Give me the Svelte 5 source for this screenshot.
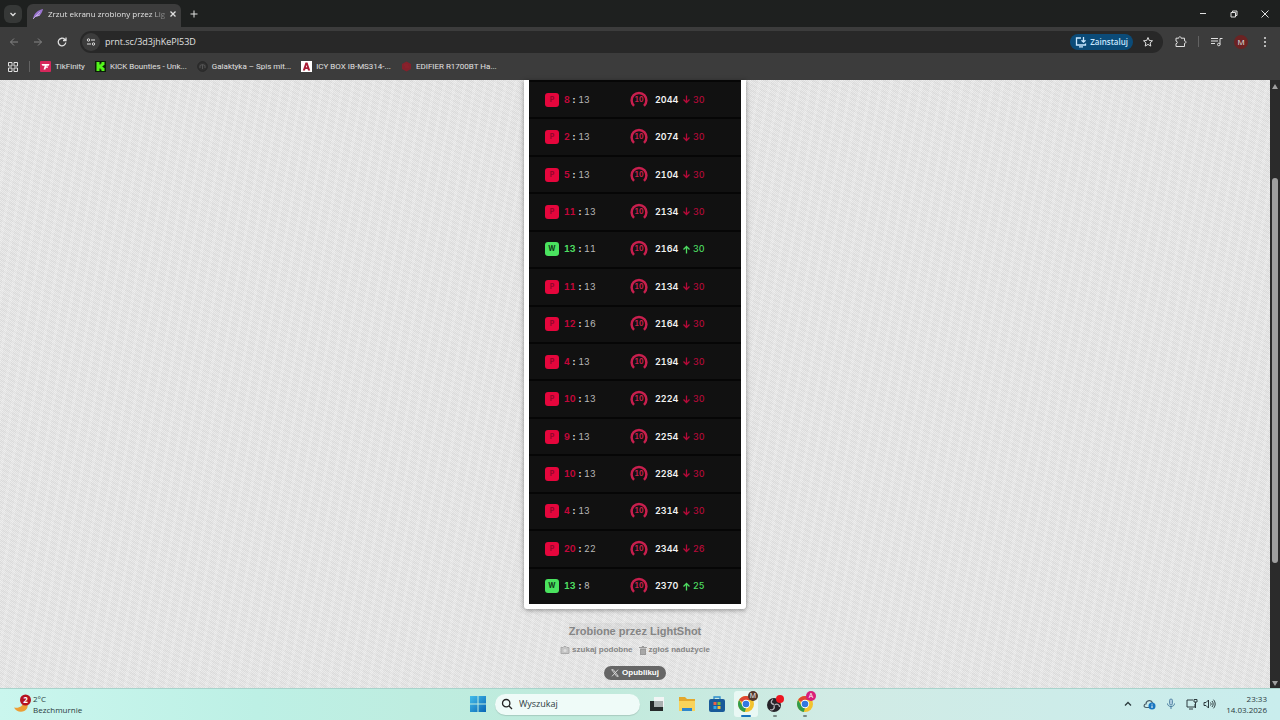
<script lang="ts">
  interface Match {
    own: number;
    rival: number;
    elo: number;
    change: number;
    won?: boolean;
  }

  const matches: Match[] = [
    { own: 8, rival: 13, elo: 2044, change: 30 },
    { own: 2, rival: 13, elo: 2074, change: 30 },
    { own: 5, rival: 13, elo: 2104, change: 30 },
    { own: 11, rival: 13, elo: 2134, change: 30 },
    { own: 13, rival: 11, elo: 2164, change: 30, won: true },
    { own: 11, rival: 13, elo: 2134, change: 30 },
    { own: 12, rival: 16, elo: 2164, change: 30 },
    { own: 4, rival: 13, elo: 2194, change: 30 },
    { own: 10, rival: 13, elo: 2224, change: 30 },
    { own: 9, rival: 13, elo: 2254, change: 30 },
    { own: 10, rival: 13, elo: 2284, change: 30 },
    { own: 4, rival: 13, elo: 2314, change: 30 },
    { own: 20, rival: 22, elo: 2344, change: 26 },
    { own: 13, rival: 8, elo: 2370, change: 25, won: true },
  ];

  const bookmarks = [
    { icon: "tik", title: "TikFinity" },
    { icon: "kick", title: "KICK Bounties - Unk..." },
    { icon: "galaxy", title: "Galaktyka – Spis mit..." },
    { icon: "icy", title: "ICY BOX IB-MS314-..." },
    { icon: "edifier", title: "EDIFIER R1700BT Ha..." },
  ];

  let url = $state("prnt.sc/3d3jhKePl53D");
  let query = $state("Wyszukaj");
</script>

{#snippet chrome()}
  <svg width="18" height="18" viewBox="0 0 18 18">
    <circle cx="9" cy="9" r="8" fill="#f2c32e" />
    <path d="M9 9 2.1 5A8 8 0 0 1 15.9 5H9z" fill="#df4634" />
    <path d="M2.1 5 5.6 11 9 13 7.8 16.900A8 8 0 0 1 2.1 5z" fill="#2f9c4d" />
    <circle cx="9" cy="9" r="4.2" fill="#fff" />
    <circle cx="9" cy="9" r="3.3" fill="#3478e0" />
  </svg>
{/snippet}

<div class="screen">
  <header class="titlebar">
    <button class="tab-search" aria-label="Search tabs">
      <svg width="10" height="10" viewBox="0 0 10 10"><path d="M2.500 4 5 6.500 7.500 4" class="line bold" /></svg>
    </button>
    <div class="tab">
      <svg width="12" height="12" viewBox="0 0 12 12">
        <path d="M1 11C2 5 6 2 11 1 10 6 7 9 3 9z" fill="#9a74cf" />
        <path d="M1 11 8 4M4 8l4-1" stroke="#d9c8f2" stroke-width=".7" />
      </svg>
      <span class="tab-title">Zrzut ekranu zrobiony przez Lig</span>
      <button aria-label="Close tab">
        <svg width="8" height="8" viewBox="0 0 8 8"><path d="m1.500 1.500 5 5M6.500 1.500l-5 5" class="line bold" /></svg>
      </button>
    </div>
    <button class="new-tab" aria-label="New tab">
      <svg width="10" height="10" viewBox="0 0 10 10"><path d="M5 1.500v7M1.500 5h7" class="line" /></svg>
    </button>
    <div class="window-buttons">
      <button aria-label="Minimize"><svg width="10" height="10" viewBox="0 0 10 10"><path d="M2 4.500h6" class="line" /></svg></button>
      <button aria-label="Restore">
        <svg width="10" height="10" viewBox="0 0 10 10"><path d="M2 3.500h4.500V8H2zM3.500 3.500V2H8v4.500H6.500" class="line" /></svg>
      </button>
      <button aria-label="Close"><svg width="10" height="10" viewBox="0 0 10 10"><path d="m1.500 1.500 7 7M8.500 1.500l-7 7" class="line" /></svg></button>
    </div>
  </header>

  <nav class="toolbar" aria-label="Navigation">
    <button class="dim" aria-label="Back"><svg width="12" height="12" viewBox="0 0 12 12"><path d="M10 6H2.500M6 2.500 2.500 6 6 9.500" class="line" /></svg></button>
    <button class="dim" aria-label="Forward"><svg width="12" height="12" viewBox="0 0 12 12"><path d="M2 6h7.500M6 2.500 9.500 6 6 9.500" class="line" /></svg></button>
    <button aria-label="Reload">
      <svg width="12" height="12" viewBox="0 0 12 12"><path d="M9.800 6.500A3.800 3.800 0 1 1 8.700 3.300L10 4.500M10 1.500v3H7" class="line bold" /></svg>
    </button>
    <div class="omnibox">
      <button class="site-info" aria-label="Site information">
        <svg width="10" height="10" viewBox="0 0 10 10">
          <circle cx="2.500" cy="3" r="1.200" class="line" /><circle cx="7.500" cy="7" r="1.200" class="line" />
          <path d="M5 3h4M1 7h4" class="line" />
        </svg>
      </button>
      <input class="url" aria-label="Address" bind:value={url} />
      <button class="install">
        <svg width="12" height="12" viewBox="0 0 12 12">
          <path d="M6 2H1.500v7h9V7.500M4 10.800h4M8.500 1v5M6.500 4.200l2 2 2-2" class="line bold" />
        </svg>
        Zainstaluj
      </button>
      <button class="star" aria-label="Bookmark this page">
        <svg width="12" height="12" viewBox="0 0 12 12"><path d="m6 1.500 1.300 3 3.200.3-2.400 2.100.7 3.200L6 8.400l-2.800 1.700.7-3.200-2.400-2.100 3.200-.3z" class="line" /></svg>
      </button>
    </div>
    <div class="actions">
      <button aria-label="Extensions">
        <svg width="13" height="13" viewBox="0 0 13 13"><path d="M2 3.200h2.700c0-2 2.400-2 2.400 0H10.500v2.700c2 0 2 2.400 0 2.400v3.200H2V8.700c1.800 0 1.800-2.600 0-2.600z" class="line" /></svg>
      </button>
      <span class="divider"></span>
      <button aria-label="Media">
        <svg width="13" height="12" viewBox="0 0 13 12"><path d="M1 2.500h7M1 5h7M1 7.500h4M12.500 2.500H10v6" class="line" /><circle cx="8.800" cy="8.500" r="1.300" class="line" /></svg>
      </button>
      <button class="profile" aria-label="Profile">M</button>
      <button aria-label="Menu">
        <svg width="12" height="12" viewBox="0 0 12 12" fill="currentColor"><circle cx="6" cy="2" r="1" /><circle cx="6" cy="6" r="1" /><circle cx="6" cy="10" r="1" /></svg>
      </button>
    </div>
  </nav>

  <nav class="bookmarks" aria-label="Bookmarks">
    <button aria-label="Apps">
      <svg width="12" height="12" viewBox="0 0 12 12"><path d="M1.500 1.500h3.500v3.500H1.500zM7 1.500h3.500v3.500H7zM1.500 7h3.500v3.500H1.500zM7 7h3.500v3.500H7z" class="line" /></svg>
    </button>
    <span class="divider"></span>
    {#each bookmarks as bookmark}
      <a href="#{bookmark.icon}">
        <svg width="11" height="11" viewBox="0 0 11 11">
          {#if bookmark.icon === "tik"}
            <rect width="11" height="11" rx="1" fill="#d6285c" />
            <path d="M1.500 3h8L8.700 4.700H6.600L5.400 8.500H3.600l1.100-3.800H2.500zM6.300 5.500h2L7.800 6.700H6z" fill="#fff" />
          {:else if bookmark.icon === "kick"}
            <rect width="11" height="11" fill="#0b1d08" />
            <path d="M1.500 1h3v2.500h1v-1h1V1h3v3h-1v1h-1v1h1v1h1v3h-3V8.500h-1v-1h-1V10h-3z" fill="#54f51b" />
          {:else if bookmark.icon === "galaxy"}
            <circle cx="5.500" cy="5.500" r="4.800" fill="#303030" stroke="#262626" />
            <path d="M3 7V4.500l2.500-1 2.500 1V7M5.500 3.500V8" fill="none" stroke="#555" />
          {:else if bookmark.icon === "icy"}
            <rect width="11" height="11" fill="#fff" />
            <path d="M1.800 9.500 4.500 1.500h2l2.700 8H7L6.600 8H4.400L4 9.500zM4.900 6.300h1.200l-.6-2.200z" fill="#a91c35" />
          {:else}
            <path d="M5.500.5 10 3v5l-4.500 2.500L1 8V3z" fill="#84202b" />
            <path d="M3 4h4M4 6h4" stroke="#96252f" stroke-width=".8" />
          {/if}
        </svg>
        {bookmark.title}
      </a>
    {/each}
  </nav>

  <div class="viewport">
    <main>
      <div class="card">
        <ul class="matches">
          {#each matches as match}
            <li class:won={match.won}>
              <span class="badge">{match.won ? "W" : "P"}</span>
              <span class="score"><b>{match.own}</b><i>:</i>{match.rival}</span>
              <span class="level">
                <svg width="20" height="20" viewBox="0 0 20 20">
                  <path d="M5 15.800A7.400 7.400 0 1 1 15 15.800" fill="none" stroke="#c81f4e" stroke-width="2.500" />
                </svg>
                <span>10</span>
              </span>
              <strong>{match.elo}</strong>
              <span class="change">
                <svg width="9" height="9" viewBox="0 0 9 9">
                  <path d={match.won ? "M4.500 8.500v-7M1.500 4.500l3-3 3 3" : "M4.500 .5v7M1.500 4.500l3 3 3-3"} class="line bold" />
                </svg>
                {match.change}
              </span>
            </li>
          {/each}
        </ul>
      </div>
      <footer>
        <a class="made" href="#lightshot">Zrobione przez LightShot</a>
        <div class="links">
          <a href="#similar">
            <svg width="10" height="8" viewBox="0 0 10 8"><path d="M1 1.500h2l1-1h2l1 1h2v6H1z" fill="#c4c4c4" stroke="#aaa" /><circle cx="5" cy="4.500" r="1.500" fill="#ddd" /></svg>
            szukaj podobne
          </a>
          <a href="#abuse">
            <svg width="8" height="9" viewBox="0 0 8 9"><path d="M0 1h8v1H0zM3 0h2v1H3zM1 2.500h6V9H1z" fill="#999" /><path d="M3 4v4M5 4v4" stroke="#ccc" stroke-width=".6" /></svg>
            zgłoś nadużycie
          </a>
        </div>
        <button class="publish">
          <svg width="8" height="8" viewBox="0 0 8 8"><path d="M.7.7h1.600l5 6.600H5.700zM7 .7 1 7.300" fill="none" stroke="#ddd" stroke-width=".9" /></svg>
          Opublikuj
        </button>
      </footer>
    </main>
    <div class="scrollbar">
      <svg width="6" height="5" viewBox="0 0 6 5"><path d="M3 0 6 5H0z" fill="#a0a0a0" /></svg>
      <div class="track"><div class="thumb"></div></div>
      <svg width="6" height="5" viewBox="0 0 6 5"><path d="M0 0h6L3 5z" fill="#a0a0a0" /></svg>
    </div>
  </div>

  <div class="taskbar">
    <button class="weather">
      <svg width="19" height="20" viewBox="0 0 19 20">
        <path d="M1 13.500c5 1 9-1 9.500-6 4 1 5 4 3.500 7C11 19 4 19 1 13.500z" fill="#ec9e35" />
        <circle cx="12.500" cy="6" r="5.500" fill="#b51220" />
        <text x="12.500" y="9" text-anchor="middle" font-size="8" font-weight="700" fill="#fff">2</text>
      </svg>
      <span>2°C<br />Bezchmurnie</span>
    </button>
    <div class="dock">
      <button aria-label="Start">
        <svg width="16" height="16" viewBox="0 0 16 16">
          <defs><linearGradient id="win" x2="1" y2="1"><stop stop-color="#43bdea" /><stop offset="1" stop-color="#0865b5" /></linearGradient></defs>
          <path d="M0 0h7.500v7.500H0zM8.500 0H16v7.500H8.500zM0 8.500h7.500V16H0zM8.500 8.500H16V16H8.500z" fill="url(#win)" />
        </svg>
      </button>
      <label class="search">
        <svg width="12" height="12" viewBox="0 0 12 12"><circle cx="5.200" cy="5.200" r="3.700" fill="none" stroke="#222" stroke-width="1.300" /><path d="m8 8 3 3" stroke="#222" stroke-width="1.300" /></svg>
        <input aria-label="Wyszukaj" bind:value={query} />
      </label>
      <div class="apps">
        <button aria-label="Task view">
          <svg width="16" height="16" viewBox="0 0 16 16"><path d="M5 1h10v10H5z" fill="#f2f5f5" /><path d="M1 5h4v6h9v4H1z" fill="#252929" /><path d="M5 5h9v6H5z" fill="#aab0b0" /></svg>
        </button>
        <button aria-label="File Explorer">
          <svg width="18" height="16" viewBox="0 0 18 16"><path d="M1 1h6l2 2h8v12H1z" fill="#e4a82c" /><path d="M1 5h16v10H1z" fill="#f8d35a" /><path d="M4 12h10v3H4z" fill="#2f86cc" /></svg>
        </button>
        <button aria-label="Microsoft Store">
          <svg width="16" height="16" viewBox="0 0 16 16">
            <path d="M5 4V1h6v3" fill="none" stroke="#2d8dcc" stroke-width="1.300" /><rect y="3" width="16" height="13" rx="2" fill="#195a99" />
            <path d="M4.500 6h3v3h-3z" fill="#ec6046" /><path d="M8.500 6h3v3h-3z" fill="#79bd3c" /><path d="M4.500 10h3v3h-3z" fill="#35a8e8" /><path d="M8.500 10h3v3h-3z" fill="#f4bd32" />
          </svg>
        </button>
        <button class="active" aria-label="Chrome, M">{@render chrome()}<span class="user brown">M</span></button>
        <button class="running" aria-label="OBS Studio">
          <svg width="18" height="18" viewBox="0 0 18 18">
            <circle cx="8" cy="10" r="7" fill="#262329" />
            <path d="M8 9.500c-4-1-3-4-1-5M8.500 10c3-2 5 0 5 2M8 10.500c1 3-1 5-4 4" fill="none" stroke="#b5b1b7" stroke-width="1.300" />
            <circle cx="14" cy="4" r="4" fill="#ed1621" />
          </svg>
        </button>
        <button class="running" aria-label="Chrome, A">{@render chrome()}<span class="user pink">A</span></button>
      </div>
    </div>
    <div class="tray">
      <button aria-label="Hidden icons"><svg width="10" height="10" viewBox="0 0 10 10"><path d="m2 6.500 3-3 3 3" class="line bold" /></svg></button>
      <button aria-label="OneDrive">
        <svg width="13" height="12" viewBox="0 0 13 12"><path d="M6 9.500H3C.5 9.500.5 6 3 6c.3-4 5.500-4.500 6.500-1" fill="none" stroke="#4c5f68" stroke-width="1.200" /><circle cx="9" cy="8" r="3.500" fill="#1976c0" /><path d="M9 7.500V10M9 5.800v.8" stroke="#fff" /></svg>
      </button>
      <button aria-label="Microphone">
        <svg width="10" height="12" viewBox="0 0 10 12"><rect x="3.500" y="1" width="3" height="6" rx="1.500" fill="#aac8dc" stroke="#487b9e" stroke-width=".8" /><path d="M1.500 5.500c0 4 7 4 7 0M5 8.500V11" fill="none" stroke="#487b9e" /></svg>
      </button>
      <button class="sound" aria-label="Network and sound">
        <svg width="12" height="12" viewBox="0 0 12 12"><path d="M7 2H1v7h8V6M3 11h4M8 1.500h3V4H8zM9.500 4v6" class="line" /></svg>
        <svg width="13" height="12" viewBox="0 0 13 12"><path d="M1 4.500h2l2.500-2.500v8L3 7.500H1zM7.500 4.500c.8 1 .8 2 0 3M9 3c1.500 2 1.500 4 0 6M10.500 1.700c2.200 2.800 2.200 5.800 0 8.600" class="line" /></svg>
      </button>
      <button class="clock">23:33<br />14.03.2026</button>
    </div>
  </div>
</div>

<style>
  :global(body) {
    margin: 0;
  }

  .screen {
    display: flex;
    flex-direction: column;
    height: 100vh;
    overflow: hidden;
    font-family: "Open Sans", "Noto Sans", sans-serif;
    font-size: 9px;
    line-height: 12px;
    color: #e0e0e0;
  }

  button,
  input {
    padding: 0;
    border: 0;
    outline: 0;
    background: none;
    color: inherit;
    font: inherit;
  }

  button {
    display: flex;
    flex: none;
    align-items: center;
    justify-content: center;
  }

  a {
    color: inherit;
    text-decoration: none;
  }

  svg {
    display: block;
    flex: none;
  }

  .line {
    fill: none;
    stroke: currentColor;
    stroke-width: 1;
  }

  .bold {
    stroke-width: 1.3;
  }

  .titlebar {
    display: flex;
    align-items: center;
    height: 27px;
    padding-left: 4px;
    background: #1e201f;
  }

  .tab-search {
    width: 18px;
    height: 18px;
    border-radius: 6px;
    background: #363837;
  }

  .tab {
    display: flex;
    align-self: flex-end;
    align-items: center;
    gap: 4px;
    box-sizing: border-box;
    width: 154px;
    height: 23px;
    margin-left: 5px;
    padding: 0 6px 3px 5px;
    border-radius: 6px 6px 0 0;
    background: #3c3c3c;
    font-size: 8px;
  }

  .tab-title {
    flex: 1;
    white-space: nowrap;
    mask-image: linear-gradient(90deg, #000 86%, #0005);
  }

  .new-tab {
    width: 26px;
  }

  .window-buttons {
    display: flex;
    margin-left: auto;
  }

  .window-buttons button {
    width: 31px;
    height: 26px;
  }

  .toolbar {
    display: flex;
    align-items: center;
    height: 29px;
    padding-left: 2px;
    background: #3c3c3c;
  }

  .toolbar > button {
    width: 24px;
  }

  .dim {
    color: #858585;
  }

  .omnibox {
    display: flex;
    flex: 1;
    align-items: center;
    height: 22px;
    margin-left: 6px;
    border-radius: 11px;
    background: #282828;
  }

  .site-info {
    width: 18px;
    height: 18px;
    margin: 0 5px 0 2px;
    border-radius: 50%;
    background: #3c3c3c;
  }

  .url {
    flex: 1;
    min-width: 0;
  }

  .install {
    gap: 3px;
    height: 16px;
    padding: 0 5px;
    border-radius: 8px;
    background: #0b4b78;
    color: #c9e7ff;
    font-size: 8px;
    font-weight: 600;
  }

  .star {
    width: 30px;
  }

  .actions {
    display: flex;
    align-items: center;
    gap: 11px;
    padding: 0 9px 0 11px;
  }

  .divider {
    flex: none;
    width: 1px;
    height: 11px;
    background: #626262;
  }

  .profile {
    width: 14px;
    height: 14px;
    border-radius: 50%;
    background: #6b2323;
    font-size: 8px;
  }

  .bookmarks {
    display: flex;
    align-items: center;
    gap: 10px;
    box-sizing: border-box;
    height: 24px;
    padding: 0 7px 3px;
    background: #3c3c3c;
    font-family: Roboto, sans-serif;
    font-size: 8px;
  }

  .bookmarks a {
    display: flex;
    align-items: center;
    gap: 4px;
    white-space: nowrap;
  }

  .viewport {
    display: flex;
    flex: 1;
    min-height: 0;
  }

  main {
    display: flex;
    flex: 1;
    flex-direction: column;
    align-items: center;
    background:
      repeating-linear-gradient(100deg, #0000 0 7px, #ffffff28 7px 10px),
      repeating-linear-gradient(25deg, #0000 0 3px, #00000006 3px 5px),
      repeating-conic-gradient(#dfdfdf 0 25%, #ebebeb 0 50%) 0 0 / 2px 2px;
  }

  .card {
    display: flex;
    flex: 1;
    padding: 0 5px 5px;
    border-radius: 0 0 3px 3px;
    background: #fff;
    box-shadow: 0 1px 5px #0006;
  }

  .matches {
    display: grid;
    grid-auto-rows: 1fr;
    width: 212px;
    margin: 0;
    padding: 0;
    background: #060606;
    font-family: Inter, sans-serif;
    font-variant-numeric: tabular-nums;
    list-style: none;
  }

  .matches li {
    display: flex;
    align-items: center;
    padding: 0 16px;
    border-top: 2px solid #060606;
    background: #111;
    color: #b9b9b9;
  }

  .badge {
    width: 14px;
    border-radius: 3px;
    background: #e5063c;
    color: #94052a;
    font-size: 7px;
    font-weight: 700;
    line-height: 14px;
    text-align: center;
  }

  .won .badge {
    background: #4ae35f;
    color: #103818;
  }

  .score {
    width: 66px;
    margin-left: 5px;
  }

  .score b {
    color: #c1073a;
  }

  .won .score b {
    color: #4ddc61;
  }

  .score i {
    margin: 0 3px;
    color: #eee;
    font-style: normal;
    font-weight: 700;
  }

  .level {
    display: grid;
    place-items: center;
    margin-right: 6px;
    margin-left: -1px;
    color: #c81f4e;
    font-size: 7px;
    font-weight: 700;
  }

  .level > * {
    grid-area: 1 / 1;
  }

  .matches strong {
    width: 27px;
    color: #f2f2f2;
    font-weight: 600;
  }

  .change {
    display: flex;
    align-items: center;
    gap: 2px;
    color: #b50a39;
    font-weight: 500;
  }

  .won .change {
    color: #4ddc61;
  }

  footer {
    display: flex;
    flex-direction: column;
    align-items: center;
    padding: 14px 0 8px;
    color: #858585;
    font-family: "Liberation Sans", sans-serif;
    font-size: 8px;
    font-weight: 700;
  }

  .made {
    padding: 1px 0;
    background: #0000000a;
    font-size: 11px;
    line-height: 14px;
  }

  .links {
    display: flex;
    gap: 6px;
    margin: 5px 0 10px;
  }

  .links a {
    display: flex;
    align-items: center;
    gap: 2px;
  }

  .publish {
    gap: 3px;
    height: 14px;
    padding: 0 7px;
    border-radius: 7px;
    background: #666;
    color: #fff;
  }

  .scrollbar {
    display: flex;
    flex-direction: column;
    align-items: center;
    width: 10px;
    padding: 4px 0 2px;
    box-sizing: border-box;
    background: #2b2b2b;
  }

  .track {
    display: flex;
    flex: 1;
    flex-direction: column;
    width: 6px;
  }

  .track::before {
    flex: 15;
    content: "";
  }

  .track::after {
    flex: 20;
    content: "";
  }

  .thumb {
    flex: 65;
    border-radius: 3px;
    background: #9f9f9f;
  }

  .taskbar {
    display: grid;
    grid-template-columns: 1fr auto 1fr;
    align-items: center;
    box-sizing: border-box;
    height: 32px;
    padding: 0 3px 1px 13px;
    border-top: 1px solid #a9d3cc;
    background: linear-gradient(90deg, #caf6ee, #bdf0e5 20%, #bfeadb 45%, #d1ebe5 65%, #c9eded);
    color: #2c3b3e;
    font-size: 8px;
  }

  .weather {
    justify-self: start;
    gap: 1px;
    line-height: 11px;
    text-align: left;
  }

  .dock,
  .apps,
  .tray {
    display: flex;
    align-items: center;
  }

  .search {
    display: flex;
    align-items: center;
    gap: 6px;
    box-sizing: border-box;
    width: 145px;
    height: 21px;
    margin: 0 2px 0 9px;
    padding: 0 6px;
    border-radius: 11px;
    background: #effbf8;
    box-shadow: 0 1px 1px #0002;
    font-size: 9px;
  }

  .search input {
    flex: 1;
    min-width: 0;
  }

  .apps button {
    position: relative;
    width: 30px;
    height: 30px;
  }

  .apps .active {
    width: 24px;
    height: 26px;
    margin: 0 2px;
    border-radius: 3px;
    background: #e9f8f4;
  }

  .active::after,
  .running::after {
    position: absolute;
    bottom: 0;
    width: 10px;
    height: 2px;
    border-radius: 1px;
    background: #1673bd;
    content: "";
  }

  .running::after {
    bottom: 2px;
    width: 4px;
    background: #788885;
  }

  .user {
    position: absolute;
    top: 0;
    right: 0;
    width: 10px;
    border-radius: 50%;
    color: #fff;
    font-size: 7px;
    line-height: 10px;
  }

  .brown {
    background: #53382c;
  }

  .running .user {
    top: 2px;
    right: 4px;
  }

  .pink {
    background: #d8207a;
  }

  .tray {
    gap: 10px;
    justify-self: end;
  }

  .sound {
    gap: 5px;
  }

  .clock {
    display: block;
    padding-right: 10px;
    line-height: 11px;
    text-align: right;
  }
</style>
